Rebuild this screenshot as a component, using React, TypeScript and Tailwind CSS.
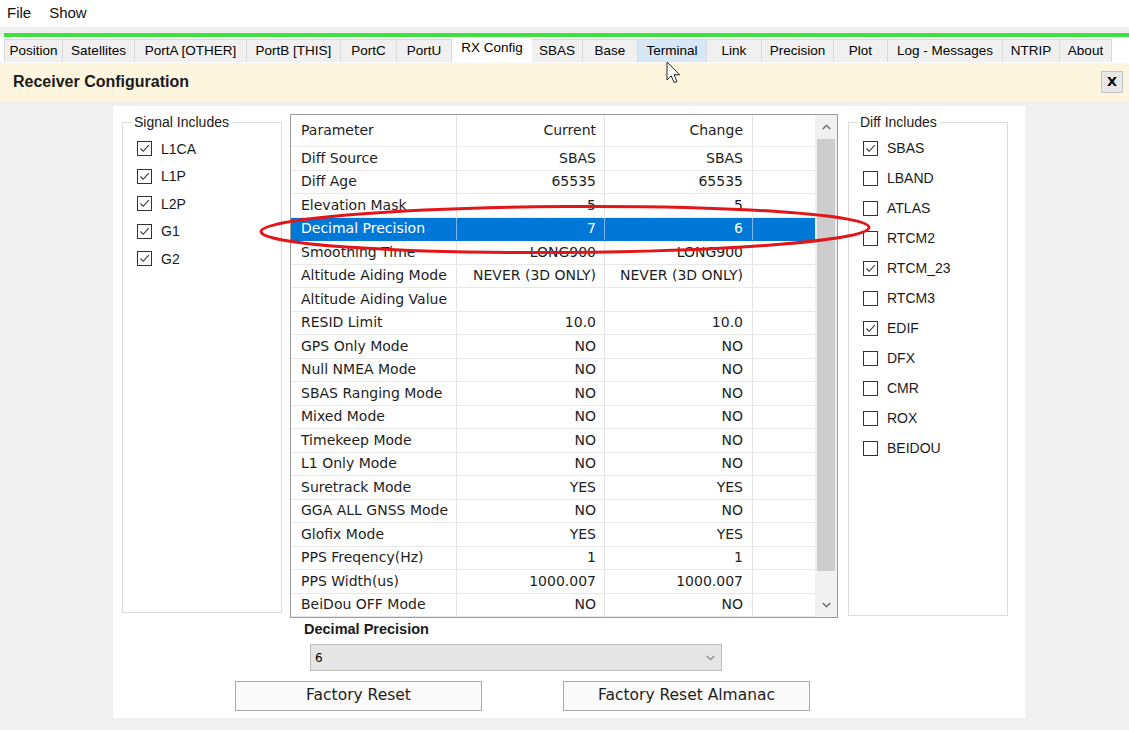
import React from "react";

const tabs: [string, number][] = [
  ["Position", 59],
  ["Satellites", 72],
  ["PortA [OTHER]", 112],
  ["PortB [THIS]", 94],
  ["PortC", 56],
  ["PortU", 55],
  ["RX Config", 80],
  ["SBAS", 51],
  ["Base", 55],
  ["Terminal", 69],
  ["Link", 55],
  ["Precision", 72],
  ["Plot", 54],
  ["Log - Messages", 115],
  ["NTRIP", 57],
  ["About", 52],
];

const rows: [string, string, string][] = [
  ["Diff Source", "SBAS", "SBAS"],
  ["Diff Age", "65535", "65535"],
  ["Elevation Mask", "5", "5"],
  ["Decimal Precision", "7", "6"],
  ["Smoothing Time", "LONG900", "LONG900"],
  ["Altitude Aiding Mode", "NEVER (3D ONLY)", "NEVER (3D ONLY)"],
  ["Altitude Aiding Value", "", ""],
  ["RESID Limit", "10.0", "10.0"],
  ["GPS Only Mode", "NO", "NO"],
  ["Null NMEA Mode", "NO", "NO"],
  ["SBAS Ranging Mode", "NO", "NO"],
  ["Mixed Mode", "NO", "NO"],
  ["Timekeep Mode", "NO", "NO"],
  ["L1 Only Mode", "NO", "NO"],
  ["Suretrack Mode", "YES", "YES"],
  ["GGA ALL GNSS Mode", "NO", "NO"],
  ["Glofix Mode", "YES", "YES"],
  ["PPS Freqency(Hz)", "1", "1"],
  ["PPS Width(us)", "1000.007", "1000.007"],
  ["BeiDou OFF Mode", "NO", "NO"],
];

const signals = ["L1CA", "L1P", "L2P", "G1", "G2"];

const diffs: [string, boolean][] = [
  ["SBAS", true],
  ["LBAND", false],
  ["ATLAS", false],
  ["RTCM2", false],
  ["RTCM_23", true],
  ["RTCM3", false],
  ["EDIF", true],
  ["DFX", false],
  ["CMR", false],
  ["ROX", false],
  ["BEIDOU", false],
];

const CheckBox = ({ checked }: { checked: boolean }) => (
  <span className="flex h-[15px] w-[15px] shrink-0 items-center justify-center border border-[#333333] bg-white">
    {checked && (
      <svg width="13" height="13" viewBox="0 0 13 13">
        <path d="M2.5 6.5 L5.2 9.3 L10.8 3.2" fill="none" stroke="#333" strokeWidth="1.1" />
      </svg>
    )}
  </span>
);

const Chevron = ({ up, color = "#606060" }: { up?: boolean; color?: string }) => (
  <svg width="9" height="6" viewBox="0 0 9 6">
    <path
      d={up ? "M0.8 5 L4.5 1.3 L8.2 5" : "M0.8 1 L4.5 4.7 L8.2 1"}
      fill="none"
      stroke={color}
      strokeWidth="1.3"
    />
  </svg>
);

const GroupBox = ({
  title,
  height,
  rowHeight,
  padTop,
  items,
}: {
  title: string;
  height: string;
  rowHeight: string;
  padTop: string;
  items: [string, boolean][];
}) => (
  <fieldset className={`w-[160px] border border-[#dcdcdc] ${height}`}>
    <legend className="ml-[8px] px-[3px] text-[14px] leading-[16px] text-[#1a1a1a]">{title}</legend>
    <div className={`flex flex-col pl-[14px] ${padTop}`}>
      {items.map(([label, checked]) => (
        <div key={label} className={`flex items-center gap-[9px] ${rowHeight}`}>
          <CheckBox checked={checked} />
          <span className="text-[14px] leading-none text-[#1a1a1a]">{label}</span>
        </div>
      ))}
    </div>
  </fieldset>
);

const ParamTable = () => (
  <div className="flex h-[504px] w-[548px] border border-[#9c9c9c] bg-white font-['DejaVu_Sans',sans-serif] text-[14px] text-[#1e1e1e]">
    <div className="flex w-[524px] flex-col">
      <div className="flex h-[32px] border-b border-[#efefef]">
        <div className="flex w-[166px] items-center border-r border-[#e3e3e3] pl-[10px]">Parameter</div>
        <div className="flex w-[148px] items-center justify-end border-r border-[#e3e3e3] pr-[8px]">Current</div>
        <div className="flex w-[148px] items-center justify-end border-r border-[#e3e3e3] pr-[9px]">Change</div>
        <div className="w-[62px]" />
      </div>
      {rows.map(([name, cur, chg]) => {
        const sel = name === "Decimal Precision";
        const line = sel ? "border-[#7fb5e6]" : "border-[#e3e3e3]";
        return (
          <div
            key={name}
            className={`flex h-[23.5px] border-b ${sel ? "border-[#0078d7] bg-[#0078d7] text-white" : "border-[#e8e8e8]"}`}
          >
            <div className={`flex w-[166px] items-center whitespace-nowrap border-r pl-[10px] ${line}`}>{name}</div>
            <div className={`flex w-[148px] items-center justify-end whitespace-nowrap border-r pr-[8px] ${line}`}>{cur}</div>
            <div className={`flex w-[148px] items-center justify-end whitespace-nowrap border-r pr-[9px] ${line}`}>{chg}</div>
            <div className="w-[62px]" />
          </div>
        );
      })}
    </div>
    <div className="flex w-[22px] flex-col bg-[#f0f0f0]">
      <div className="flex h-[24px] items-center justify-center">
        <Chevron up />
      </div>
      <div className="mx-[2px] h-[432px] bg-[#cdcdcd]" />
      <div className="flex-1" />
      <div className="flex h-[24px] items-center justify-center">
        <Chevron />
      </div>
    </div>
  </div>
);

export default function App() {
  return (
    <div className="relative h-[730px] w-[1129px] overflow-hidden bg-[#f0f0f0] font-['Liberation_Sans',Arial,sans-serif] text-black">
      {/* menu */}
      <div className="flex h-[27px] items-center gap-[18px] bg-white pl-[7px] text-[15px] text-[#111]">
        <span>File</span>
        <span>Show</span>
      </div>
      <div className="h-[6px] bg-[#f0f0f0]" />
      <div className="ml-[4px] h-[4px] bg-[#3ce23c]" />

      {/* tabs */}
      <div className="flex h-[26px] bg-white pl-[4px]">
        {tabs.map(([label, w]) => {
          const active = label === "RX Config";
          const hover = label === "Terminal";
          return (
            <div
              key={label}
              style={{ width: w }}
              className={
                active
                  ? "flex h-[26px] items-center justify-center bg-white pb-[3px] text-[13.5px]"
                  : `mt-[2px] flex h-[23px] items-center justify-center border-r border-t border-[#dadada] text-[13.5px] ${
                      hover ? "bg-[#d8e7f5]" : "bg-[#f0f0f0]"
                    } ${label === "Position" ? "border-l" : ""}`
              }
            >
              {label}
            </div>
          );
        })}
        <div className="flex-1" />
      </div>

      {/* header */}
      <div className="flex h-[38px] items-center justify-between bg-[#fdf5de] pl-[13px] pr-[6px]">
        <span className="text-[16px] font-bold text-[#1a1a1a]">Receiver Configuration</span>
        <div className="flex h-[22px] w-[22px] items-center justify-center border border-[#c4c4c4] bg-[#e8e8e8] font-['DejaVu_Sans',sans-serif] text-[13px] font-bold">
          X
        </div>
      </div>

      {/* content */}
      <div className="pl-[113px] pt-[5px]">
        <div className="h-[612px] w-[912px] bg-white pt-[8px]">
          <div className="flex items-start pl-[9px]">
            <GroupBox
              title="Signal Includes"
              height="h-[499px]"
              rowHeight="h-[27.5px]"
              padTop="pt-[5px]"
              items={signals.map((s) => [s, true] as [string, boolean])}
            />
            <div className="ml-[8px] flex flex-col">
              <ParamTable />
              <div className="ml-[14px] mt-[2px] h-[18px] text-[14.5px] font-bold leading-[18px] text-[#1a1a1a]">
                Decimal Precision
              </div>
              <div className="ml-[20px] mt-[6px] flex h-[27px] w-[412px] items-center justify-between border border-[#bdbdbd] bg-[#e5e5e5] pl-[4px] pr-[6px] font-['DejaVu_Sans',sans-serif] text-[12px]">
                <span>6</span>
                <Chevron color="#888" />
              </div>
            </div>
            <div className="ml-[10px]">
              <GroupBox title="Diff Includes" height="h-[502px]" rowHeight="h-[30px]" padTop="pt-[3px]" items={diffs} />
            </div>
          </div>
          <div className="mt-[10px] flex gap-[81px] pl-[122px] font-['DejaVu_Sans',sans-serif] text-[15.5px] text-[#1e1e1e]">
            <button className="h-[30px] w-[247px] border border-[#a9a9a9] bg-[#fafafa] shadow-[inset_0_0_0_1px_#ffffff]">
              Factory Reset
            </button>
            <button className="h-[30px] w-[247px] border border-[#a9a9a9] bg-[#fafafa] shadow-[inset_0_0_0_1px_#ffffff]">
              Factory Reset Almanac
            </button>
          </div>
        </div>
      </div>

      {/* annotation ellipse */}
      <svg className="pointer-events-none absolute left-0 top-0" width="1129" height="730">
        <ellipse
          cx="565"
          cy="229.5"
          rx="304"
          ry="23"
          fill="none"
          stroke="#e2161a"
          strokeWidth="3"
          transform="rotate(-0.4 565 229.5)"
        />
      </svg>

      {/* mouse cursor */}
      <svg className="pointer-events-none absolute left-[666px] top-[61px]" width="16" height="24" viewBox="0 0 16 24">
        <path
          d="M1 1 L1 19 L5.2 14.8 L8.2 21.6 L11 20.4 L8 13.8 L13.6 13.8 Z"
          fill="white"
          stroke="#222"
          strokeWidth="1"
          strokeLinejoin="miter"
        />
      </svg>
    </div>
  );
}
